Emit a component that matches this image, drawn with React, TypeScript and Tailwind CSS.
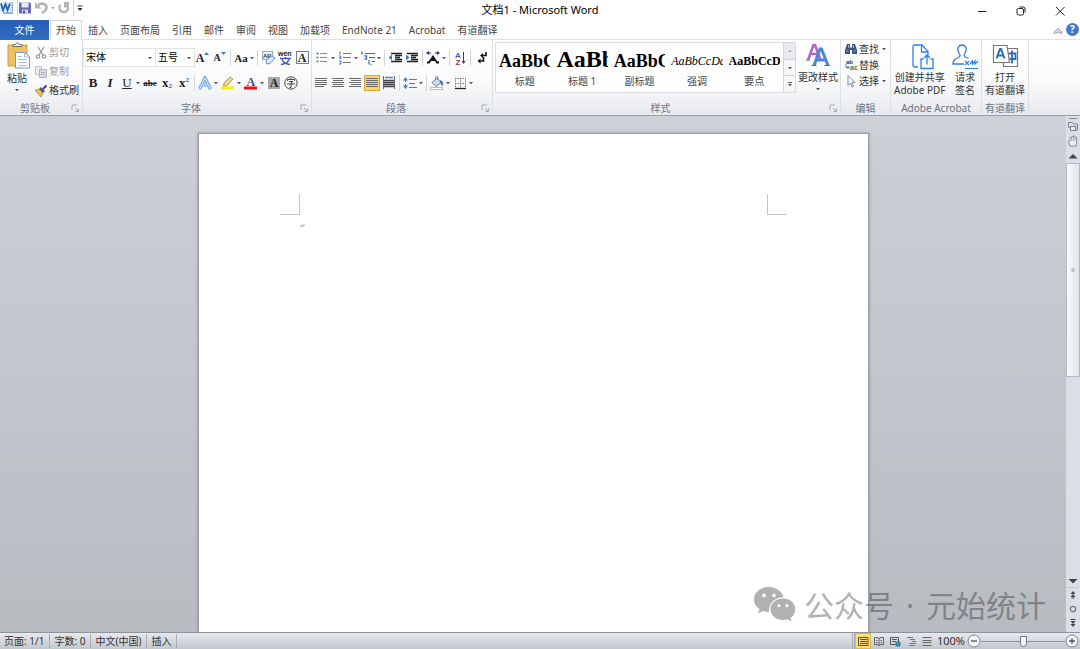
import React from 'react';

const tabs = ['插入', '页面布局', '引用', '邮件', '审阅', '视图', '加载项', 'EndNote 21', 'Acrobat', '有道翻译'];

const styleSamples = [
    { name: '标题', sample: 'AaBbC', look: 'text-[18px] leading-[36px] font-bold' },
    { name: '标题 1', sample: 'AaBb', look: 'text-[24px] leading-[32px] font-bold' },
    { name: '副标题', sample: 'AaBbC', look: 'text-[18px] leading-[36px] font-bold' },
    { name: '强调', sample: 'AaBbCcDd', look: 'text-[12px] leading-[36px] italic' },
    { name: '要点', sample: 'AaBbCcD', look: 'text-[12px] leading-[36px] font-bold' },
];

const Svg: React.FC<{ size?: string; box?: string; children: React.ReactNode }> = ({ size = 'h-4 w-4', box = '0 0 16 16', children }) => (
    <svg viewBox={box} className={`${size} shrink-0`} fill="none" aria-hidden="true">
        {children}
    </svg>
);

const Caret: React.FC<{ className?: string }> = ({ className = '' }) => (
    <svg viewBox="0 0 6 4" className={`h-1 w-1.5 shrink-0 ${className}`} aria-hidden="true">
        <path d="M1 1h4L3 3.2z" fill="#555" />
    </svg>
);

const Divider = () => <span className="flex h-4 w-[3px] shrink-0 justify-center"><span className="w-px bg-[#d3d6da]" /></span>;

const Tool: React.FC<{ label: string; caret?: boolean; active?: boolean; children: React.ReactNode }> = ({ label, caret, active, children }) => (
    <button
        aria-label={label}
        title={label}
        className={`flex h-4 shrink-0 items-center ${active ? 'bg-[#fdd667] ring-1 ring-inset ring-[#d9a83c]' : ''}`}
    >
        {children}
        {caret && <Caret />}
    </button>
);

const Glyph: React.FC<{ className?: string; children: React.ReactNode }> = ({ className = '', children }) => (
    <span className={`flex h-4 w-4 items-center justify-center font-['Liberation_Serif',serif] leading-4 text-[#222] ${className}`}>{children}</span>
);

const Group: React.FC<{ name: string; width: string; launcher?: boolean; children: React.ReactNode }> = ({ name, width, launcher, children }) => (
    <section aria-label={name} className={`flex shrink-0 flex-col border-r border-[#dcdfe3] ${width}`}>
        <div className="flex flex-1">{children}</div>
        <div className="flex h-3.5 items-center">
            <span className="flex-1 text-center whitespace-nowrap text-[#6a7482]">{name}</span>
            {launcher && (
                <button aria-label={`${name}设置`} className="mr-0.5">
                    <Svg size="h-2.5 w-2.5" box="0 0 10 10">
                        <path d="M2 7V2h5M5 5l3 3M8.500 5.500v3h-3" stroke="#a3a8af" />
                    </Svg>
                </button>
            )}
        </div>
    </section>
);

const Lines: React.FC<{ rows: [number, number][] }> = ({ rows }) => (
    <Svg>
        {rows.map(([x, w], i) => (
            <path key={i} d={`M${x} ${3.5 + i * 2}h${w}`} stroke="#6a6a6a" />
        ))}
    </Svg>
);

const TitleBar = () => (
    <header className="grid h-5 shrink-0 grid-cols-[1fr_auto_1fr] items-center bg-white">
        <div className="flex items-center pb-1">
            <Svg>
                <path d="M3.500 2.500h9v11h-9z" fill="#fff" stroke="#8fa9d2" />
                <path d="M11 5.500h1M11 7.500h1M11 9.500h1M4 12.500h8" stroke="#9db8dd" />
                <path d="M0 2h11v9.500H0z" fill="#dce9f8" />
                <path d="M1 3.500l2 6.500 2.500-6 2 6L10 3.500" stroke="#1f5fb8" strokeWidth="1.800" />
            </Svg>
            <Divider />
            <button aria-label="保存">
                <Svg size="h-4 w-3" box="0 0 12 16">
                    <path d="M0 2.500h11l1 1v10H0z" fill="#6a67b0" />
                    <path d="M2.500 2.500h7v5h-7z" fill="#e9ebf7" />
                    <path d="M3 9.500h6v4H3z" fill="#d4d3ea" />
                    <path d="M4 10.500h2v3H4z" fill="#55529b" />
                </Svg>
            </button>
            <button aria-label="撤消" className="ml-[3px] flex items-center">
                <Svg>
                    <path d="M4 5.500c3-3.500 8.500-2 8.500 2 0 2.500-2 4-4.500 5.500" stroke="#b1b3b8" strokeWidth="2.600" />
                    <path d="M1 2v6.500h6.500z" fill="#b1b3b8" />
                </Svg>
                <Caret className="opacity-50" />
            </button>
            <button aria-label="重复">
                <Svg>
                    <path d="M4.500 5a4.300 4.300 0 1 0 6.500 0" stroke="#b1b3b8" strokeWidth="2.400" />
                    <path d="M8 2h5v5.500H8z" fill="#b1b3b8" />
                </Svg>
            </button>
            <Divider />
            <button aria-label="自定义快速访问工具栏" className="pl-px">
                <Svg size="h-2 w-2" box="0 0 8 8">
                    <path d="M1.500 2h5" stroke="#333" />
                    <path d="M1.500 4h5L4 7z" fill="#333" />
                </Svg>
            </button>
        </div>
        <h1 className="text-[11px] text-black">文档1 - Microsoft Word</h1>
        <div className="flex justify-end pt-0.5 pr-px">
            <button aria-label="最小化" className="flex w-[39px] justify-center">
                <Svg size="h-3 w-3" box="0 0 12 12"><path d="M2 6.500h8.500" stroke="#222" /></Svg>
            </button>
            <button aria-label="还原" className="flex w-[39px] justify-center">
                <Svg size="h-3 w-3" box="0 0 12 12">
                    <rect x="2" y="3.500" width="6.500" height="6.500" rx="1.500" stroke="#222" />
                    <path d="M4.500 2h3.500a2 2 0 0 1 2 2v3.500" stroke="#222" />
                </Svg>
            </button>
            <button aria-label="关闭" className="flex w-[39px] justify-center">
                <Svg size="h-3 w-3" box="0 0 12 12"><path d="M2 2l8.500 8.500M10.500 2L2 10.500" stroke="#222" /></Svg>
            </button>
        </div>
    </header>
);

const TabRow = () => (
    <nav className="flex h-5 shrink-0 items-stretch bg-white text-[#444]">
        <button className="w-[49px] bg-gradient-to-b from-[#2a5eb0] to-[#2f6cc4] pt-px text-white">文件</button>
        <button className="ml-px border-x border-t border-[#d5d8dc] bg-white px-[5px]">开始</button>
        {tabs.map(tab => (
            <button key={tab} className="border-b border-[#dfe2e6] px-1.5 pt-0.5 whitespace-nowrap">{tab}</button>
        ))}
        <div className="flex flex-1 items-center justify-end gap-0.5 border-b border-[#dfe2e6]">
            <button aria-label="功能区最小化">
                <Svg size="h-3 w-3" box="0 0 12 12"><path d="M2 8.500L6 4.500l4 4-1.500 1L6 7.500l-2.500 2z" stroke="#777f8a" /></Svg>
            </button>
            <button aria-label="帮助" className="mr-px h-[13px] w-[13px] rounded-full bg-[#3f78cc] text-[10px] leading-[13px] font-bold text-white">?</button>
        </div>
    </nav>
);

const ClipboardGroup = () => (
    <Group name="剪贴板" width="w-[83px]" launcher>
        <button className="flex w-[34px] flex-col items-center">
            <Svg size="h-8 w-8" box="0 0 32 32">
                <path d="M7 5h19v21H7z" fill="#f0bf62" stroke="#d59f3f" />
                <path d="M12 6.500V4.500h2.500c0-2 4-2 4 0H21v2z" fill="#f5f5f5" stroke="#6d6d6d" />
                <path d="M14.500 12.500h9l5 4.500v11h-14z" fill="#fff" stroke="#7b97bd" />
                <path d="M23.500 12.500V17h5M17 16.500h4M17 19.500h9M17 22.500h9M17 25.500h9" stroke="#a9bfdc" />
            </Svg>
            <span className="leading-3">粘贴</span>
            <Caret className="mt-1" />
        </button>
        <div className="flex flex-col pt-[3px] text-[#9b9b9b]">
            <button className="flex h-[19px] items-center">
                <Svg size="h-3.5 w-3.5" box="0 0 14 14">
                    <path d="M4 1l5 8M10 1L5 9" stroke="#9a9da2" strokeWidth="1.400" />
                    <circle cx="4" cy="10.500" r="1.700" stroke="#9a9da2" strokeWidth="1.300" />
                    <circle cx="10" cy="10.500" r="1.700" stroke="#9a9da2" strokeWidth="1.300" />
                </Svg>
                <span className="pl-px">剪切</span>
            </button>
            <button className="flex h-[19px] items-center">
                <Svg size="h-3.5 w-3.5" box="0 0 14 14">
                    <path d="M1.500 1.500h6v8h-6z" fill="#eceaf0" stroke="#c3c0ca" />
                    <path d="M5.500 4.500h7v8h-7z" fill="#dedbe5" stroke="#b3b0bb" />
                    <path d="M7 7.500h4M7 9.500h4" stroke="#b3b0bb" />
                </Svg>
                <span className="pl-px">复制</span>
            </button>
            <button className="flex h-[19px] items-center text-[#333]">
                <Svg size="h-3.5 w-3.5" box="0 0 14 14">
                    <path d="M1 6l4-1 4 4-2 4z" fill="#e9bd55" stroke="#a98430" strokeWidth=".7" />
                    <path d="M5 5l2-2 4 4-2 2z" fill="#4b5f84" />
                    <path d="M9 5l3.500-3.500" stroke="#34456a" strokeWidth="2" />
                </Svg>
                <span className="pl-px">格式刷</span>
            </button>
        </div>
    </Group>
);

const ComboBox: React.FC<{ label: string; value: string; width: string }> = ({ label, value, width }) => (
    <div className={`relative flex h-[19px] items-center border border-[#dfe2e6] bg-white ${width}`}>
        <select aria-label={label} defaultValue={value} className="h-full w-full appearance-none pl-0.5 text-black outline-none">
            <option>{value}</option>
        </select>
        <Caret className="pointer-events-none absolute right-0.5" />
    </div>
);

const FontGroup = () => (
    <Group name="字体" width="w-[229px]" launcher>
        <div className="flex flex-col gap-2 pt-2">
            <div className="flex h-[19px] items-center gap-px">
                <div className="-mr-px flex">
                    <ComboBox label="字体" value="宋体" width="w-[73px]" />
                    <ComboBox label="字号" value="五号" width="-ml-px w-10" />
                </div>
                <Tool label="增大字体">
                    <Glyph className="text-[12px] font-bold">A<Svg size="h-3 w-1.5" box="0 0 6 12"><path d="M0 3l2.500-3L5 3z" fill="#3e7cc9" /></Svg></Glyph>
                </Tool>
                <Tool label="缩小字体">
                    <Glyph className="text-[10px] font-bold">A<Svg size="h-3 w-1.5" box="0 0 6 12"><path d="M0 0h5L2.500 3z" fill="#3e7cc9" /></Svg></Glyph>
                </Tool>
                <Divider />
                <Tool label="更改大小写" caret><Glyph className="text-[11px] font-bold">Aa</Glyph></Tool>
                <Divider />
                <Tool label="清除格式">
                    <Svg>
                        <rect x="2.500" y="1.500" width="10" height="8" fill="#eef3fa" stroke="#8ea7cb" />
                        <text x="3" y="8" fontSize="6" fontWeight="bold" fill="#333" fontFamily="Liberation Sans">AB</text>
                        <path d="M6 11l5-5 4 2-5 5.500-3.500.5z" fill="#dbe7f8" stroke="#6c8fc6" />
                    </Svg>
                </Tool>
                <Tool label="拼音指南">
                    <Svg>
                        <text x="1" y="6" fontSize="7" fontWeight="bold" fill="#222" fontFamily="Liberation Sans">wén</text>
                        <path d="M3 8.500h11M8.500 7v2M5 9.500c1 3 4 4.500 8 5M12 9.500c-1 3-4 4.500-8 5" stroke="#3d57b8" strokeWidth="1.300" />
                    </Svg>
                </Tool>
                <Tool label="字符边框">
                    <Glyph><span className="flex h-[13px] w-[13px] items-center justify-center border border-[#6e7f95] text-[12px] font-bold">A</span></Glyph>
                </Tool>
            </div>
            <div className="flex items-center gap-px pl-0.5">
                <Tool label="加粗"><Glyph className="text-[13px] font-bold">B</Glyph></Tool>
                <Tool label="倾斜"><Glyph className="text-[13px] font-bold italic">I</Glyph></Tool>
                <Tool label="下划线" caret><Glyph className="text-[13px] underline">U</Glyph></Tool>
                <Tool label="删除线"><Glyph className="text-[9px] font-bold line-through">abc</Glyph></Tool>
                <Tool label="下标"><Glyph className="text-[13px] font-bold">x<span className="pt-1.5 text-[7px] text-[#3553a8]">2</span></Glyph></Tool>
                <Tool label="上标"><Glyph className="text-[13px] font-bold">x<span className="pb-1.5 text-[7px] text-[#3553a8]">2</span></Glyph></Tool>
                <Divider />
                <Tool label="文本效果" caret>
                    <Svg>
                        <path d="M3 13L8 3l5 10M5.500 10h5" stroke="#b4d6f5" strokeWidth="4" strokeLinejoin="round" strokeLinecap="round" />
                        <path d="M3 13.500L8 3l5 10.500M5.500 10h5" stroke="#5b9bd8" strokeWidth="2.400" />
                        <path d="M3 13.500L8 3l5 10.500M5.500 10h5" stroke="#f4faff" />
                    </Svg>
                </Tool>
                <Tool label="突出显示" caret>
                    <Svg>
                        <path d="M1 11.500h13v3H1z" fill="#fdf100" />
                        <path d="M4 8l6-6 3 2-6 6.500-3.500.5z" fill="#f0d878" stroke="#8b8b8b" strokeWidth=".8" />
                    </Svg>
                </Tool>
                <Tool label="字体颜色" caret>
                    <Svg>
                        <text x="3.500" y="10.500" fontSize="12" fontWeight="bold" fill="#3c4f80" fontFamily="Liberation Serif">A</text>
                        <path d="M1 11.500h13v3H1z" fill="#f01010" />
                    </Svg>
                </Tool>
                <Tool label="字符底纹">
                    <Glyph><span className="flex h-3 w-3 items-center justify-center bg-[#a8a8a8] text-[12px] font-bold">A</span></Glyph>
                </Tool>
                <Tool label="带圈字符">
                    <Svg>
                        <circle cx="8" cy="8" r="6.200" stroke="#444" />
                        <path d="M8 3v1.500M4.500 6V4.500h7V6M6 6.500h4L8 8v4.500H6.500M4 9h8" stroke="#333" strokeWidth=".9" />
                    </Svg>
                </Tool>
            </div>
        </div>
    </Group>
);

const ParagraphGroup = () => (
    <Group name="段落" width="w-[181px]" launcher>
        <div className="flex flex-col gap-2 pt-2 pl-px">
            <div className="flex h-[19px] items-center gap-px pl-px">
                <Tool label="项目符号" caret>
                    <Svg>
                        <path d="M6 3.500h7M6 7.500h7M6 11.500h7" stroke="#8a8a8a" />
                        <path d="M2.500 3.500h2M2.500 7.500h2M2.500 11.500h2" stroke="#3f6fc0" strokeWidth="1.600" />
                    </Svg>
                </Tool>
                <Tool label="编号" caret>
                    <Svg>
                        <path d="M6 3.500h8M6 7.500h8M6 12.500h8" stroke="#777" />
                        <path d="M3 1.500v3M2 6h2l-1.500 2.500h2M2 11h2v3H2" stroke="#3f6fc0" />
                    </Svg>
                </Tool>
                <Tool label="多级列表" caret>
                    <Svg>
                        <path d="M5 3.500h10M9 7.500h6M12 11.500h3" stroke="#666" />
                        <path d="M2 1.500v3M4.500 6h2v3h-2M9 10v4.500M10.500 14.500h1" stroke="#3f6fc0" strokeWidth="1.300" />
                    </Svg>
                </Tool>
                <Divider />
                <Tool label="减少缩进量">
                    <Svg>
                        <path d="M4 3.500h11M8 5.500h7M8 7.500h5M8 9.500h7M4 11.500h11" stroke="#222" strokeWidth="1.300" />
                        <path d="M5 4.500v6L1.500 7.500z" fill="#3e7cc9" />
                    </Svg>
                </Tool>
                <Tool label="增加缩进量">
                    <Svg>
                        <path d="M3 3.500h11M7 5.500h7M7 7.500h5M7 9.500h7M3 11.500h11" stroke="#222" strokeWidth="1.300" />
                        <path d="M2 4.500v6l3.500-3z" fill="#3e7cc9" />
                    </Svg>
                </Tool>
                <Divider />
                <Tool label="中文版式" caret>
                    <Svg>
                        <path d="M2 12.500h2l4-6 4 6h2M5 10h6" stroke="#111" strokeWidth="1.800" />
                        <path d="M2 3h4M10 3h4" stroke="#1f2fa0" strokeWidth="1.200" />
                        <path d="M4 1v4L1 3zM12 1v4l3-2z" fill="#1f2fa0" />
                    </Svg>
                </Tool>
                <Divider />
                <Tool label="排序">
                    <Svg>
                        <text x="3" y="7.500" fontSize="8" fontWeight="bold" fill="#3b62b5" fontFamily="Liberation Sans">A</text>
                        <text x="3.500" y="14.500" fontSize="8" fontWeight="bold" fill="#a33c4c" fontFamily="Liberation Sans">Z</text>
                        <path d="M11.500 2v10" stroke="#444" />
                        <path d="M9.500 11h4l-2 3z" fill="#444" />
                    </Svg>
                </Tool>
                <Divider />
                <Tool label="显示编辑标记">
                    <Svg>
                        <path d="M13 2v3.500H9M10.500 7v4H7" stroke="#111" strokeWidth="1.600" />
                        <path d="M10 3v5L7 5.500zM7.500 8.500v5L4.500 11z" fill="#111" />
                    </Svg>
                </Tool>
            </div>
            <div className="flex items-center gap-px">
                <Tool label="左对齐"><Lines rows={[[2, 12], [2, 12], [2, 12], [2, 12], [2, 9]]} /></Tool>
                <Tool label="居中"><Lines rows={[[2, 12], [3, 10], [2, 12], [3, 10], [2, 12]]} /></Tool>
                <Tool label="右对齐"><Lines rows={[[2, 12], [4, 10], [2, 12], [4, 10], [2, 12]]} /></Tool>
                <Tool label="两端对齐" active><Lines rows={[[2, 12], [2, 12], [2, 12], [2, 12], [2, 12]]} /></Tool>
                <Tool label="分散对齐">
                    <Svg>
                        <path d="M2.500 1v13M13.500 1v13" stroke="#666" />
                        <path d="M4 2.500h8" stroke="#3e7cc9" strokeWidth="1.400" />
                        <path d="M3 5.500h10M3 7.500h10M3 9.500h10M3 11.500h10" stroke="#444" strokeWidth="1.300" />
                    </Svg>
                </Tool>
                <Divider />
                <Tool label="行距" caret>
                    <Svg>
                        <path d="M7 4.500h8M7 8.500h6M7 12.500h8" stroke="#777" />
                        <path d="M3.500 4v9" stroke="#3e7cc9" strokeDasharray="3 2" />
                        <path d="M1 5.500L3.500 2 6 5.500zM1 10.500L3.500 14 6 10.500z" fill="#3e7cc9" />
                    </Svg>
                </Tool>
                <Divider />
                <Tool label="底纹" caret>
                    <Svg>
                        <path d="M3 7.500L8 3l4 4.500-5 4z" fill="#cfdbea" stroke="#6f8096" />
                        <path d="M6.500 5V2.500c0-1.500 2.500-1.500 2.500 0V5" stroke="#6f8096" />
                        <path d="M11 5c3 1 4 3.500 2.500 6-1.500-1-2.500-3-2.500-6z" fill="#3e6fb5" />
                        <path d="M1.500 12.500h12v2h-12z" fill="#fff" stroke="#b5b9be" />
                    </Svg>
                </Tool>
                <Tool label="框线" caret>
                    <Svg>
                        <path d="M3 3.500h11M3 8.500h11M3.500 3v10M8.500 3v10M13.500 3v10" stroke="#777" strokeDasharray="1.500 1" />
                        <path d="M3 13.500h11" stroke="#222" strokeWidth="1.300" />
                    </Svg>
                </Tool>
            </div>
        </div>
    </Group>
);

const StylesGroup = () => (
    <Group name="样式" width="w-[348px]" launcher>
        <div className="ml-0.5 mt-0.5 flex h-[51px] w-[301px] border border-[#d8dbdf] bg-white">
            <div className="grid flex-1 grid-cols-5">
                {styleSamples.map(s => (
                    <button key={s.name} className="flex min-w-0 flex-col px-[3px] text-[#444]">
                        <span className={`block h-8 w-full overflow-hidden text-left font-['Liberation_Serif',serif] whitespace-nowrap text-black ${s.look}`}>
                            {s.sample}
                        </span>
                        <span className="w-full text-center leading-3">{s.name}</span>
                    </button>
                ))}
            </div>
            <div className="flex w-3 flex-col divide-y divide-[#d0d4d9] border-l border-[#d0d4d9] bg-[#f6f7f9]">
                <button aria-label="上一行" className="flex flex-1 items-center justify-center bg-[#e8eaed]"><Caret className="rotate-180 opacity-40" /></button>
                <button aria-label="下一行" className="flex flex-1 items-center justify-center"><Caret /></button>
                <button aria-label="其他" className="flex flex-1 flex-col items-center justify-center"><span className="h-px w-1 bg-[#555]" /><Caret /></button>
            </div>
        </div>
        <button className="flex flex-1 flex-col items-center">
            <Svg size="h-[31px] w-7" box="0 0 28 31">
                <path d="M4 20L9.500 5h1.500l5.500 15M6.500 14h8" stroke="#b567c4" strokeWidth="2.600" />
                <path d="M10 25.500L16 9h1.500L24 25.500M12.500 20h9" stroke="#4c86d6" strokeWidth="3" />
                <path d="M7.500 25.500h5M20.500 25.500H26M2 20h4" stroke="#3d72c0" strokeWidth="1.200" />
            </Svg>
            <span className="leading-3">更改样式</span>
            <Caret className="mt-1" />
        </button>
    </Group>
);

const EditGroup = () => (
    <Group name="编辑" width="w-[50px]">
        <div className="flex flex-col pt-px pl-[3px]">
            <button className="flex h-4 items-center">
                <Svg size="h-3.5 w-3.5" box="0 0 14 14">
                    <path d="M3 2h3v3l1 1 1-1V2h3l2 6v4H8V8H6v4H1V8z" fill="#3a5487" />
                    <path d="M2.500 9h2M9.500 9h2M4.500 3v3M9.500 3v3" stroke="#9db4da" />
                </Svg>
                <span className="pl-px">查找</span>
                <Caret className="ml-0.5" />
            </button>
            <button className="flex h-4 items-center">
                <Svg size="h-3.5 w-3.5" box="0 0 14 14">
                    <text x="2" y="6" fontSize="6" fontWeight="bold" fill="#333" fontFamily="Liberation Sans">ab</text>
                    <text x="6" y="12" fontSize="7" fontWeight="bold" fill="#3d7a5c" fontFamily="Liberation Sans">ac</text>
                    <path d="M2 6v3.500h3M3.500 8l1.500 1.500L3.500 11" stroke="#3e7cc9" />
                </Svg>
                <span className="pl-px">替换</span>
            </button>
            <button className="flex h-4 items-center">
                <Svg size="h-3.5 w-3.5" box="0 0 14 14">
                    <path d="M4 1.500v10l2.500-2.500 1.500 4 1.500-.7-1.600-3.800h3.100z" fill="#fff" stroke="#7b8ca8" />
                </Svg>
                <span className="pl-px">选择</span>
                <Caret className="ml-0.5" />
            </button>
        </div>
    </Group>
);

const AddinButton: React.FC<{ lines: string[]; children: React.ReactNode }> = ({ lines, children }) => (
    <button className="flex flex-col items-center pt-[3px] leading-[13px]">
        {children}
        {lines.map(line => <span key={line} className="whitespace-nowrap">{line}</span>)}
    </button>
);

const AddinGroups = () => (
    <>
        <Group name="Adobe Acrobat" width="w-[91px]">
            <div className="flex flex-1 justify-between pr-0.5 pl-[3px]">
                <AddinButton lines={['创建并共享', 'Adobe PDF']}>
                    <Svg size="h-7 w-7" box="0 0 28 28">
                        <path d="M12 24H8.500A1.500 1.500 0 0 1 7 22.500V3.500A1.500 1.500 0 0 1 8.500 2H16l6 6.500V12M15.500 2v7h6.500" stroke="#2f80e8" strokeWidth="1.300" />
                        <path d="M17.500 16H15v9.500h12V16h-2.500M21 21.500V12M18 15l3-3 3 3" stroke="#2f80e8" strokeWidth="1.300" />
                    </Svg>
                </AddinButton>
                <AddinButton lines={['请求', '签名']}>
                    <Svg size="h-7 w-7" box="0 0 28 28">
                        <path d="M13 21H2c0-4 2-5.500 6-7 2-1 1-2.500 0-4-3-5 0-8 3-8s6 3 3 8c-1 1.500-1.500 3 .5 4 1.500.7 2 1 3 1.500" stroke="#2f80e8" strokeWidth="1.300" />
                        <path d="M14 18l4 4M18 18l-4 4M19 21l2.500-3v3l2.500-3v3l3-3M14 25.500h13" stroke="#2f80e8" strokeWidth="1.200" />
                    </Svg>
                </AddinButton>
            </div>
        </Group>
        <Group name="有道翻译" width="w-[47px]">
            <div className="flex flex-1 justify-center">
                <AddinButton lines={['打开', '有道翻译']}>
                    <Svg size="h-7 w-7" box="0 0 28 28">
                        <path d="M16 5.500h10.500v18H12.500v-4" fill="#fff" stroke="#777" strokeWidth="1.200" />
                        <path d="M2.500 2.500H16l2.500 17h-16z" fill="#fff" stroke="#777" strokeWidth="1.200" />
                        <path d="M5.500 15.500L9 6h1l3.500 9.500M7 12.500h5" stroke="#2f6db5" strokeWidth="2" />
                        <path d="M17.500 10.500h7v5.500h-6M21 7.500v13" stroke="#2f6db5" strokeWidth="1.800" />
                    </Svg>
                </AddinButton>
            </div>
        </Group>
    </>
);

const Page = () => (
    <main className="flex flex-1 justify-center overflow-hidden pt-[17px]">
        <article className="w-[671px] border-x border-t border-[#9a9ea4] bg-white shadow-[0_0_3px_#8a8e94]">
            <div className="flex justify-between px-[81px] pt-[60px]">
                <span className="h-[21px] w-5 border-r border-b border-[#c4c4c4]" />
                <span className="h-[21px] w-5 border-b border-l border-[#c4c4c4]" />
            </div>
            <div className="px-[100px] pt-2">
                <Svg size="h-1.5 w-1.5" box="0 0 6 6"><path d="M5 1v2H2M3 1.500L1.500 3 3 4.500" stroke="#aaa" /></Svg>
            </div>
        </article>
    </main>
);

const ScrollBar = () => (
    <aside aria-label="垂直滚动条" className="flex w-3.5 shrink-0 flex-col items-center bg-[#dadfe7]">
        <span className="mt-0.5 h-px w-2 bg-[#80868e]" />
        <button aria-label="标尺" className="mt-0.5">
            <Svg size="h-3 w-3" box="0 0 12 12">
                <path d="M1.500 1.500h4l1 1.500h4v6h-2M1.500 1.500v5h2" stroke="#7b828b" />
                <rect x="3.500" y="5.500" width="5" height="4" fill="#eee" stroke="#7b828b" />
            </Svg>
        </button>
        <button aria-label="抓手" className="mt-px">
            <Svg size="h-3.5 w-3" box="0 0 12 14">
                <path d="M3 12L1.500 7.500 3 7V3.500h1.700V2.500h1.600v-.500H8v1.500h1.700V8L9 12z" fill="#eee" stroke="#8a9097" />
                <path d="M4.700 3.500V7M6.400 3v4M8 3.500V7" stroke="#8a9097" strokeWidth=".7" />
            </Svg>
        </button>
        <button aria-label="向上滚动" className="flex h-[15px] items-center">
            <Svg size="h-3 w-3" box="0 0 12 12"><path d="M1.500 8.500L6 4l4.500 4.500z" fill="#444" /></Svg>
        </button>
        <div className="flex w-full flex-1 flex-col">
            <div className="flex basis-[52%] items-center justify-center border border-[#b4b9c0] bg-gradient-to-r from-[#f8f9fb] to-[#e2e5ea]">
                <span className="h-1 w-1 rounded-full bg-[#bcc0c6]" />
            </div>
        </div>
        <button aria-label="向下滚动" className="flex h-3.5 items-center border-b border-[#c3c7cd]">
            <Svg size="h-3 w-3" box="0 0 12 12"><path d="M1.500 4h9L6 8.500z" fill="#444" /></Svg>
        </button>
        <button aria-label="前一页" className="flex h-3.5 items-center">
            <Svg size="h-2 w-2" box="0 0 8 8"><path d="M4 0l2.500 3h-5zM4 3l2.500 3h-5zM2.500 6.500h3v1h-3z" fill="#444" /></Svg>
        </button>
        <button aria-label="选择浏览对象" className="flex h-3.5 items-center">
            <Svg size="h-2 w-2" box="0 0 8 8"><circle cx="4" cy="4" r="2.700" stroke="#777" strokeWidth="1.300" /></Svg>
        </button>
        <button aria-label="下一页" className="mb-0.5 flex h-3.5 items-center">
            <Svg size="h-2 w-2" box="0 0 8 8"><path d="M4 8l2.500-3h-5zM4 5l2.500-3h-5zM1.500 0h5v1h-5z" fill="#444" /></Svg>
        </button>
    </aside>
);

const Watermark = () => (
    <div className="pointer-events-none absolute right-[34px] bottom-1.5 flex items-center gap-2 opacity-30">
        <Svg size="h-10 w-[42px]" box="0 0 42 40">
            <path
                fill="#000"
                fillRule="evenodd"
                d="M15 1C6.500 1 0 6.500 0 13.500c0 4 2 7.300 5.500 9.700L4 27.500l5-2.500c2 .6 4 .9 6.300.9C14 18 20 11.500 29.500 11.200 28 5.300 22 1 15 1zM10 7.500a1.900 1.900 0 1 1 0 3.800 1.900 1.900 0 0 1 0-3.800zm10 0a1.900 1.900 0 1 1 0 3.800 1.900 1.900 0 0 1 0-3.800z"
            />
            <path
                fill="#000"
                fillRule="evenodd"
                d="M29 12.500c-7.200 0-12.500 4.800-12.500 10.700S21.800 34 29 34c1.600 0 3.200-.3 4.600-.7l4 2.200-1.100-3.700c3-2 4.800-5 4.800-8.600 0-5.900-5.300-10.700-12.300-10.700zM25 18a1.600 1.600 0 1 1 0 3.200 1.600 1.600 0 0 1 0-3.200zm8 0a1.600 1.600 0 1 1 0 3.200 1.600 1.600 0 0 1 0-3.200z"
            />
        </Svg>
        <p className="flex text-[30px] leading-10 whitespace-nowrap text-black">
            <span>公众号</span>
            <span className="w-8 text-center">·</span>
            <span>元始统计</span>
        </p>
    </div>
);

const ViewButton: React.FC<{ label: string; active?: boolean; children: React.ReactNode }> = ({ label, active, children }) => (
    <button
        aria-label={label}
        className={`flex h-full w-4 items-center justify-center ${active ? 'bg-[#fddb7b] ring-1 ring-inset ring-[#e3b64a]' : ''}`}
    >
        <Svg size="h-3 w-3" box="0 0 12 12">{children}</Svg>
    </button>
);

const StatusBar = () => (
    <footer className="flex h-[17px] shrink-0 items-center border-t border-[#8d939b] bg-gradient-to-b from-[#e6e9ed] to-[#c3c8ce] text-[#333]">
        {['页面: 1/1', '字数: 0', '中文(中国)', '插入'].map(item => (
            <span key={item} className="border-r border-[#a6abb2] pr-[5px] pl-1 leading-[14px]">{item}</span>
        ))}
        <span className="ml-auto h-full w-[3px] border-x border-[#a6abb2]" />
        <ViewButton label="页面视图" active>
            <path d="M1.500 2.500h9.500v8H1.500zM3 4.500h7M3 6.500h7M3 8.500h7" stroke="#555" />
        </ViewButton>
        <ViewButton label="阅读版式视图">
            <path d="M6 3.500L4 2.500H1.500v7H4l2 1 2-1h2.500v-7H8zM6 3.500v7M3 5.500h1.500M3 7.500h1.500M7.500 5.500H9M7.500 7.500H9" stroke="#555" strokeWidth=".9" />
        </ViewButton>
        <ViewButton label="Web 版式视图">
            <path d="M1.500 2.500h8v7h-8zM3 4.500h5M3 6.500h4" stroke="#555" />
            <circle cx="9" cy="9" r="2.700" fill="#2f7fb5" />
            <path d="M8 7.500l2 1-1.500 2z" fill="#63b26a" />
        </ViewButton>
        <ViewButton label="大纲视图">
            <path d="M2 2.500h6M5 4.500h5M7 6.500h4M5 8.500h6M4 10.500h6" stroke="#777" />
        </ViewButton>
        <ViewButton label="草稿">
            <path d="M1.500 2.500h9M1.500 5.500h9M1.500 7.500h9M1.500 10.500h9" stroke="#666" />
        </ViewButton>
        <button className="px-0.5 text-[11px]">100%</button>
        <button aria-label="缩小" className="flex h-3.5 w-3.5 items-center justify-center">
            <Svg size="h-3.5 w-3.5" box="0 0 14 14"><circle cx="7" cy="7" r="6" fill="#f3f4f6" stroke="#80868e" /><path d="M4 7h6" stroke="#555" strokeWidth="1.300" /></Svg>
        </button>
        <input
            type="range"
            aria-label="显示比例"
            min={0}
            max={100}
            defaultValue={50}
            className="h-3.5 w-[84px] appearance-none bg-[linear-gradient(#8b9199,#8b9199)] bg-[length:100%_1px] bg-center bg-no-repeat [&::-webkit-slider-thumb]:h-[11px] [&::-webkit-slider-thumb]:w-[7px] [&::-webkit-slider-thumb]:appearance-none [&::-webkit-slider-thumb]:rounded-b-sm [&::-webkit-slider-thumb]:border [&::-webkit-slider-thumb]:border-[#70767e] [&::-webkit-slider-thumb]:bg-[#f3f4f6]"
        />
        <button aria-label="放大" className="mr-px flex h-3.5 w-3.5 items-center justify-center">
            <Svg size="h-3.5 w-3.5" box="0 0 14 14"><circle cx="7" cy="7" r="6" fill="#f3f4f6" stroke="#80868e" /><path d="M4 7h6M7 4v6" stroke="#555" strokeWidth="1.300" /></Svg>
        </button>
    </footer>
);

const App: React.FC = () => {
    return (
        <div className="flex h-screen flex-col overflow-hidden bg-white font-['Noto_Sans','Noto_Sans_CJK_SC',sans-serif] text-[10px] text-[#333]">
            <TitleBar />
            <TabRow />
            <div className="flex h-[76px] shrink-0 border-b border-[#9aa0a8] bg-gradient-to-b from-white via-[#fbfbfc] to-[#e7eaee]">
                <ClipboardGroup />
                <FontGroup />
                <ParagraphGroup />
                <StylesGroup />
                <EditGroup />
                <AddinGroups />
            </div>
            <div className="relative flex min-h-0 flex-1 bg-gradient-to-b from-[#cdd1d7] to-[#b8bbc0]">
                <Page />
                <ScrollBar />
                <Watermark />
            </div>
            <StatusBar />
        </div>
    );
};

export default App;
